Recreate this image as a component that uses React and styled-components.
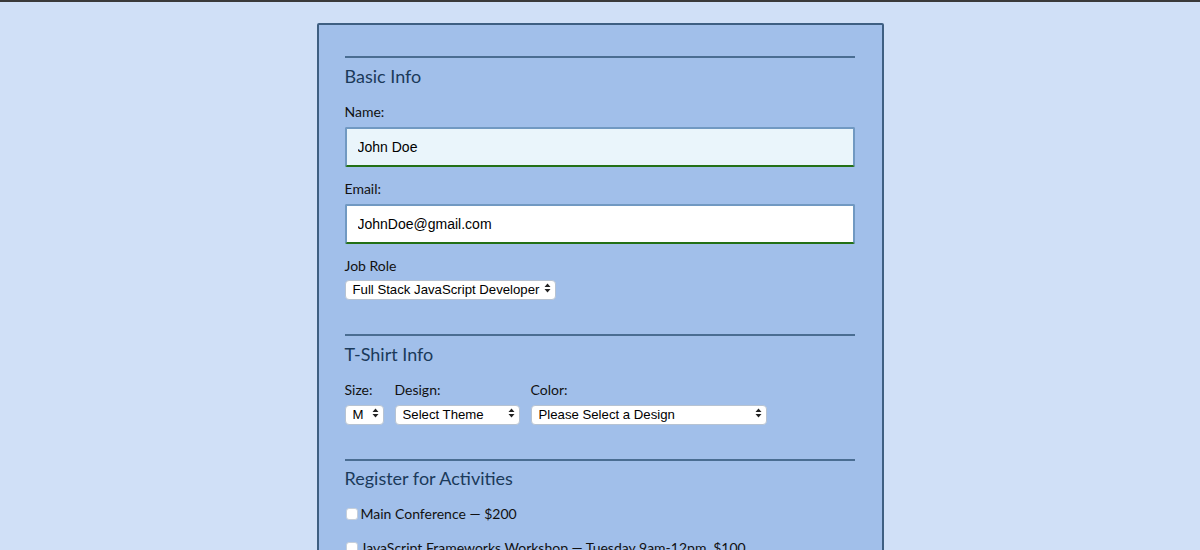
import styled, { createGlobalStyle } from 'styled-components';

const GlobalStyle = createGlobalStyle`
  html, body {
    margin: 0;
    padding: 0;
    background: #d0e0f7;
  }
  body {
    border-top: 2px solid #3a3a3a;
    font-family: "Lato", "Noto Sans", sans-serif;
    overflow: hidden;
  }
`;

const Page = styled.div`
  display: flex;
  justify-content: center;
  padding-top: 21px;
  min-height: 600px;
`;

const Card = styled.form`
  width: 510px;
  padding: 31px 27px 40px 26px;
  background: #a1bfea;
  border: 2px solid #3e5f82;
  border-radius: 2px;
`;

const Section = styled.fieldset`
  margin: 0 0 36px;
  padding: 0;
  border: none;
  border-top: 2px solid #4a6d92;
  min-width: 0;
`;

const Heading = styled.h2`
  margin: ${p => p.$top ?? 7}px 0 16px;
  font-size: 18px;
  line-height: 22px;
  font-weight: 400;
  color: #1b3a5a;
`;

const Label = styled.label`
  display: block;
  font-size: 14px;
  line-height: 18px;
  color: #111;
  margin-bottom: ${p => p.$gap ?? 5}px;
`;

const TextInput = styled.input`
  display: block;
  box-sizing: border-box;
  width: 100%;
  height: 40px;
  margin: 0 0 13px;
  padding: 0 11px;
  font-family: "Liberation Sans", Arial, sans-serif;
  font-size: 14px;
  color: #000;
  background: ${p => (p.$focused ? '#eaf5fb' : '#fff')};
  border: 2px solid #7199c2;
  border-bottom-color: #237016;
  border-radius: 2px;
  outline: none;
`;

const Row = styled.div`
  display: flex;
  gap: 11px;
`;

const Column = styled.div`
  display: flex;
  flex-direction: column;
`;

const SelectWrap = styled.div`
  position: relative;
  width: ${p => p.$width}px;
  height: 20px;
`;

const Select = styled.select`
  appearance: none;
  -webkit-appearance: none;
  box-sizing: border-box;
  width: 100%;
  height: 20px;
  padding: 0 12px 0 7px;
  font-family: "Liberation Sans", Arial, sans-serif;
  font-size: 13.2px;
  line-height: 18px;
  color: #000;
  background: #fff;
  border: 1px solid #b7c3d2;
  border-radius: 4px;
  outline: none;
`;

const Arrows = styled.svg`
  position: absolute;
  right: 5px;
  top: 5px;
  pointer-events: none;
`;

const Check = styled.input`
  appearance: none;
  -webkit-appearance: none;
  width: 12px;
  height: 12px;
  margin: 0 3px 0 1px;
  background: #fff;
  border: 1px solid #c6cfda;
  border-radius: 3px;
`;

const Activity = styled.label`
  display: flex;
  align-items: center;
  font-size: 14px;
  line-height: 18px;
  color: #111;
  margin-bottom: 16px;
`;

function DropDown({ width, children }) {
  return (
    <SelectWrap $width={width}>
      <Select defaultValue={children}>
        <option>{children}</option>
      </Select>
      <Arrows width="7" height="10" viewBox="0 0 7 10">
        <path d="M3.5 0.5 L6.5 4 H0.5 Z M3.5 9.5 L6.5 6 H0.5 Z" fill="#222" />
      </Arrows>
    </SelectWrap>
  );
}

export default function App() {
  return (
    <>
      <GlobalStyle />
      <Page>
        <Card>
          <Section>
            <Heading>Basic Info</Heading>
            <Label $gap={6}>Name:</Label>
            <TextInput $focused defaultValue="John Doe" />
            <Label $gap={6}>Email:</Label>
            <TextInput defaultValue="JohnDoe@gmail.com" />
            <Label $gap={3}>Job Role</Label>
            <DropDown width={211}>Full Stack JavaScript Developer</DropDown>
          </Section>

          <Section>
            <Heading>T-Shirt Info</Heading>
            <Row>
              <Column>
                <Label $gap={4}>Size:</Label>
                <DropDown width={39}>M</DropDown>
              </Column>
              <Column>
                <Label $gap={4}>Design:</Label>
                <DropDown width={125}>Select Theme</DropDown>
              </Column>
              <Column>
                <Label $gap={4}>Color:</Label>
                <DropDown width={236}>Please Select a Design</DropDown>
              </Column>
            </Row>
          </Section>

          <Section>
            <Heading $top={6}>Register for Activities</Heading>
            <Activity><Check type="checkbox" />Main Conference — $200</Activity>
            <Activity><Check type="checkbox" />JavaScript Frameworks Workshop — Tuesday 9am-12pm, $100</Activity>
          </Section>
        </Card>
      </Page>
    </>
  );
}
